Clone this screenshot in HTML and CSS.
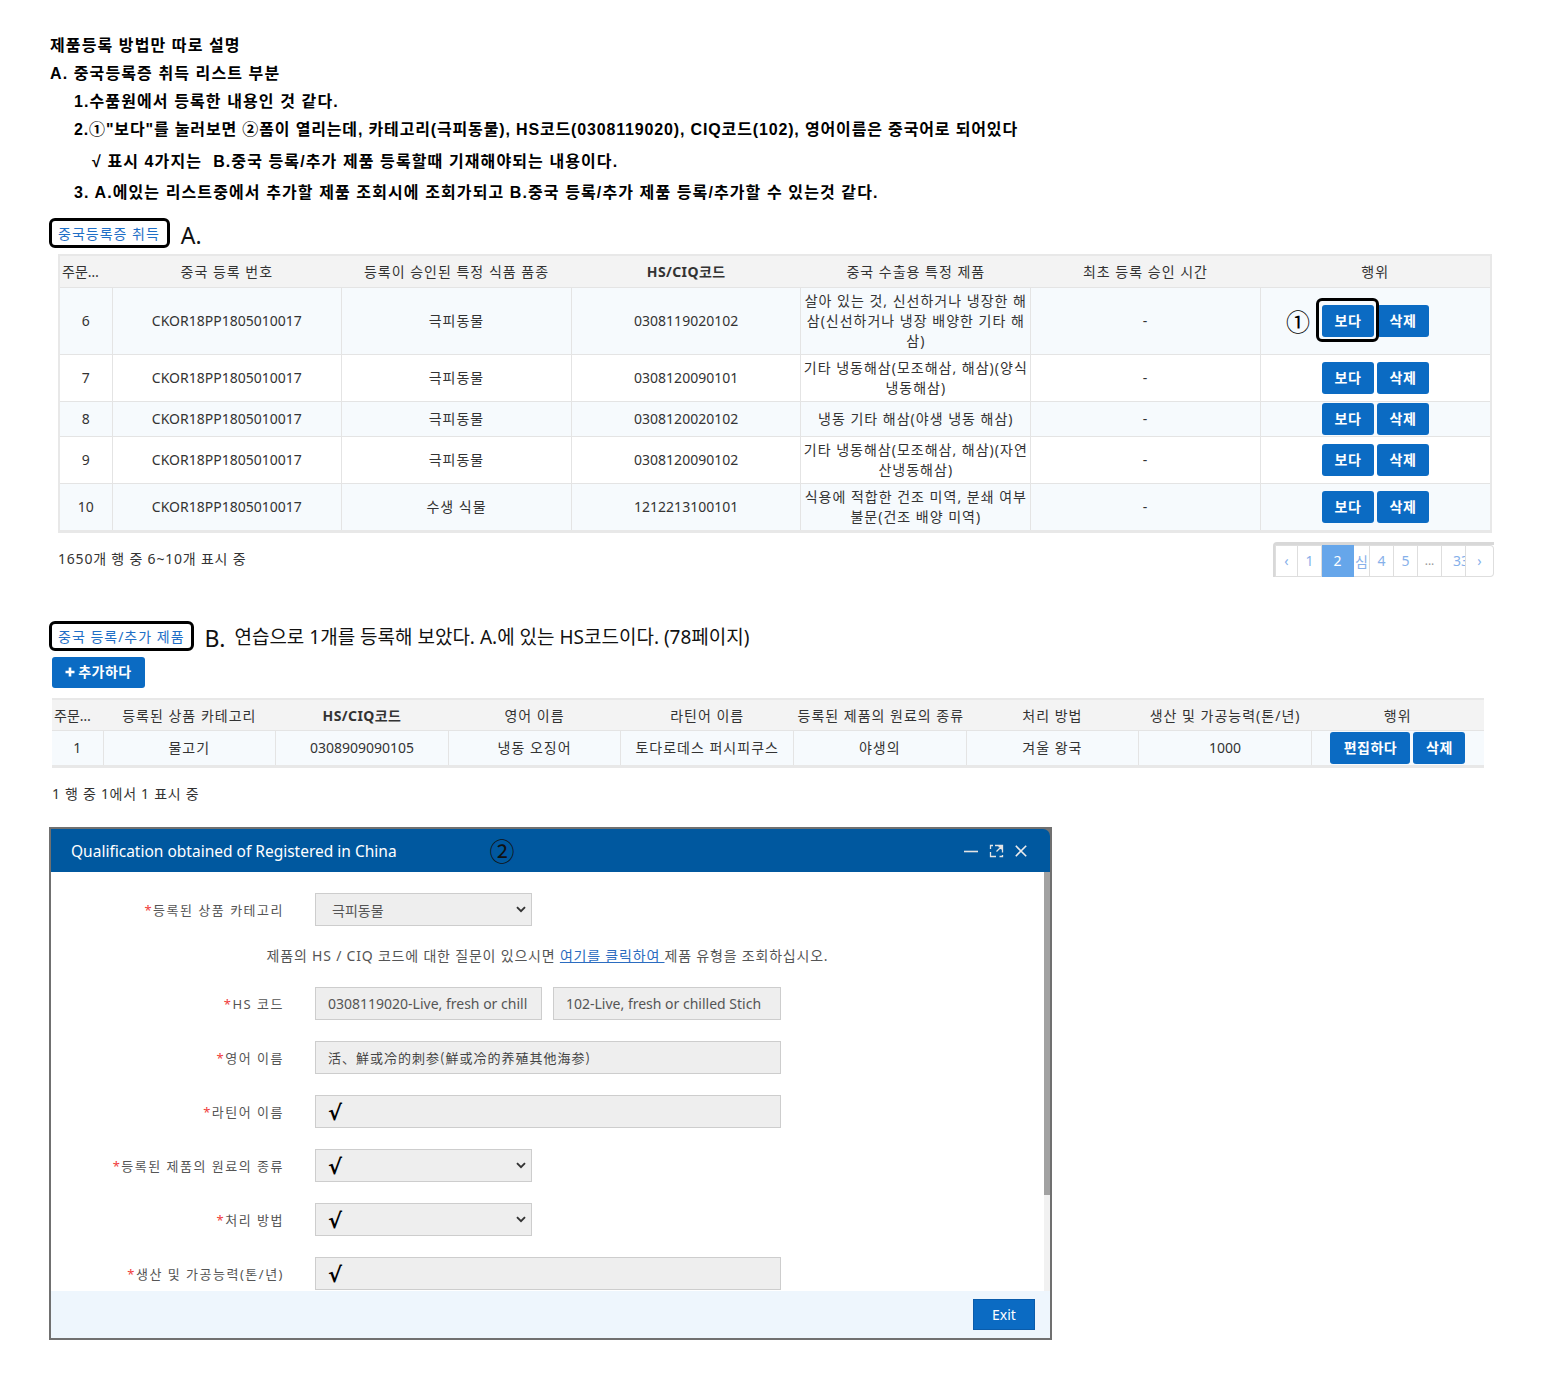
FILE: index.html
```html
<!DOCTYPE html>
<html lang="ko">
<head>
<meta charset="utf-8">
<title>제품등록 방법</title>
<link rel="stylesheet" href="styles.css">
</head>
<body>
<div class="page">
  <div class="notes">
    <p class="n0">제품등록 방법만 따로 설명</p>
    <p class="n0">A. 중국등록증 취득 리스트 부분</p>
    <p class="n1">1.수품원에서 등록한 내용인 것 같다.</p>
    <p class="n1 n4">2.①"보다"를 눌러보면 ②폼이 열리는데, 카테고리(극피동물), HS코드(0308119020), CIQ코드(102), 영어이름은 중국어로 되어있다</p>
    <p class="n2">√ 표시 4가지는 &nbsp;B.중국 등록/추가 제품 등록할때 기재해야되는 내용이다.</p>
    <p class="n1 n3">3. A.에있는 리스트중에서 추가할 제품 조회시에 조회가되고 B.중국 등록/추가 제품 등록/추가할 수 있는것 같다.</p>
  </div>

  <div class="sec-head sec-a">
    <span class="tag">중국등록증 취득</span>
    <span class="big">A.</span>
  </div>

  <div class="tbl-a-wrap">
    <table class="tbl tbl-a">
      <colgroup>
        <col class="c-no"><col><col><col><col><col><col>
      </colgroup>
      <thead>
        <tr>
          <th class="ell">주문번호</th>
          <th>중국 등록 번호</th>
          <th>등록이 승인된 특정 식품 품종</th>
          <th class="b">HS/CIQ코드</th>
          <th>중국 수출용 특정 제품</th>
          <th>최초 등록 승인 시간</th>
          <th>행위</th>
        </tr>
      </thead>
      <tbody>
        <tr class="odd">
          <td class="num">6</td><td class="num">CKOR18PP1805010017</td><td>극피동물</td><td class="num">0308119020102</td>
          <td class="nw">살아 있는 것, 신선하거나 냉장한 해<br>삼(신선하거나 냉장 배양한 기타 해<br>삼)</td>
          <td>-</td>
          <td class="act"><span class="btn hl">보다<span class="mark1">①</span></span><span class="btn">삭제</span></td>
        </tr>
        <tr>
          <td class="num">7</td><td class="num">CKOR18PP1805010017</td><td>극피동물</td><td class="num">0308120090101</td>
          <td class="nw">기타 냉동해삼(모조해삼, 해삼)(양식<br>냉동해삼)</td>
          <td>-</td>
          <td class="act"><span class="btn">보다</span><span class="btn">삭제</span></td>
        </tr>
        <tr class="odd">
          <td class="num">8</td><td class="num">CKOR18PP1805010017</td><td>극피동물</td><td class="num">0308120020102</td>
          <td class="nw">냉동 기타 해삼(야생 냉동 해삼)</td>
          <td>-</td>
          <td class="act"><span class="btn">보다</span><span class="btn">삭제</span></td>
        </tr>
        <tr>
          <td class="num">9</td><td class="num">CKOR18PP1805010017</td><td>극피동물</td><td class="num">0308120090102</td>
          <td class="nw">기타 냉동해삼(모조해삼, 해삼)(자연<br>산냉동해삼)</td>
          <td>-</td>
          <td class="act"><span class="btn">보다</span><span class="btn">삭제</span></td>
        </tr>
        <tr class="odd">
          <td class="num">10</td><td class="num">CKOR18PP1805010017</td><td>수생 식물</td><td class="num">1212213100101</td>
          <td class="nw">식용에 적합한 건조 미역, 분쇄 여부<br>불문(건조 배양 미역)</td>
          <td>-</td>
          <td class="act"><span class="btn">보다</span><span class="btn">삭제</span></td>
        </tr>
      </tbody>
    </table>
  </div>

  <div class="tfoot-a">
    <span class="count">1650개 행 중 6~10개 표시 중</span>
    <div class="pager">
      <span class="pg w23">‹</span>
      <span class="pg w24">1</span>
      <span class="pg w32 on">2</span>
      <span class="pg w16">심</span>
      <span class="pg w24">4</span>
      <span class="pg w24">5</span>
      <span class="pg w24 dots">...</span>
      <span class="pg w24 clip">33</span>
      <span class="pg w28 last">›</span>
    </div>
  </div>

  <div class="sec-head sec-b">
    <span class="tag">중국 등록/추가 제품</span>
    <span class="big">B.</span>
    <span class="mid">연습으로 1개를 등록해 보았다. A.에 있는 HS코드이다. (78페이지)</span>
  </div>

  <span class="btn add"><svg width="10" height="10" viewBox="0 0 10 10"><path d="M5 0.5v9M0.5 5h9" stroke="#fff" stroke-width="2.6"/></svg>추가하다</span>

  <table class="tbl tbl-b">
    <colgroup>
      <col class="c-no-b"><col><col><col><col><col><col><col><col>
    </colgroup>
    <thead>
      <tr>
        <th class="ell">주문번호</th>
        <th>등록된 상품 카테고리</th>
        <th class="b">HS/CIQ코드</th>
        <th>영어 이름</th>
        <th>라틴어 이름</th>
        <th>등록된 제품의 원료의 종류</th>
        <th>처리 방법</th>
        <th>생산 및 가공능력(톤/년)</th>
        <th>행위</th>
      </tr>
    </thead>
    <tbody>
      <tr class="odd">
        <td class="num">1</td><td>물고기</td><td class="num">0308909090105</td><td>냉동 오징어</td><td>토다로데스 퍼시피쿠스</td><td>야생의</td><td>겨울 왕국</td><td class="num">1000</td>
        <td class="act"><span class="btn w80">편집하다</span><span class="btn">삭제</span></td>
      </tr>
    </tbody>
  </table>

  <div class="count count-b">1 행 중 1에서 1 표시 중</div>

  <div class="dialog">
    <div class="dlg-head">
      <span class="dlg-title">Qualification obtained of Registered in China</span>
      <span class="mark2">②</span>
      <span class="spacer"></span>
      <span class="dlg-icons">
        <svg width="14" height="14" viewBox="0 0 14 14"><path d="M0 7.5h14" stroke="#e4e4e4" stroke-width="1.6"/></svg>
        <svg width="15" height="14" viewBox="0 0 15 14"><path d="M6 1.5h7.5v7M1.5 8v4.5h5.5M1.5 5v-3.5h2.5M13.5 11v1.5h-3M7.5 7.5l5-5M9.5 2.5h3v3" stroke="#e4e4e4" stroke-width="1.3" fill="none"/></svg>
        <svg width="12" height="12" viewBox="0 0 12 12"><path d="M0.8 0.8l10.4 10.4M11.2 0.8L0.8 11.2" stroke="#ececec" stroke-width="1.6"/></svg>
      </span>
    </div>
    <div class="dlg-body">
      <div class="dlg-content">
        <div class="frow">
          <label class="lbl"><i>*</i>등록된 상품 카테고리</label>
          <div class="fld sel w217"><span>극피동물</span><svg width="10" height="7" viewBox="0 0 10 7"><path d="M1 1.2l4 4 4-4" stroke="#333" stroke-width="1.9" fill="none"/></svg></div>
        </div>
        <p class="info">제품의 HS / CIQ 코드에 대한 질문이 있으시면 <a class="lnk">여기를 클릭하여 </a>제품 유형을 조회하십시오.</p>
        <div class="frow">
          <label class="lbl"><i>*</i>HS 코드</label>
          <div class="fld w227"><span class="cut">0308119020-Live, fresh or chill</span></div>
          <div class="fld w228 ml11"><span class="cut">102-Live, fresh or chilled Stich</span></div>
        </div>
        <div class="frow">
          <label class="lbl"><i>*</i>영어 이름</label>
          <div class="fld w466"><span class="zh">活、鮮或冷的刺参(鮮或冷的养殖其他海参)</span></div>
        </div>
        <div class="frow">
          <label class="lbl"><i>*</i>라틴어 이름</label>
          <div class="fld w466"><span class="chk">√</span></div>
        </div>
        <div class="frow">
          <label class="lbl"><i>*</i>등록된 제품의 원료의 종류</label>
          <div class="fld sel w217"><span class="chk">√</span><svg width="10" height="7" viewBox="0 0 10 7"><path d="M1 1.2l4 4 4-4" stroke="#333" stroke-width="1.9" fill="none"/></svg></div>
        </div>
        <div class="frow">
          <label class="lbl"><i>*</i>처리 방법</label>
          <div class="fld sel w217"><span class="chk">√</span><svg width="10" height="7" viewBox="0 0 10 7"><path d="M1 1.2l4 4 4-4" stroke="#333" stroke-width="1.9" fill="none"/></svg></div>
        </div>
        <div class="frow">
          <label class="lbl"><i>*</i>생산 및 가공능력(톤/년)</label>
          <div class="fld w466"><span class="chk">√</span></div>
        </div>
      </div>
      <div class="scrollbar"><div class="thumb"></div></div>
    </div>
    <div class="dlg-foot">
      <span class="exit">Exit</span>
    </div>
  </div>
</div>
</body>
</html>
```

FILE: styles.css
```css
* { box-sizing: border-box; }

body {
  margin: 0;
  background: #fff;
  font-family: "Noto Sans", "Noto Sans CJK KR", sans-serif;
  color: #333;
}

.page {
  padding: 30px 0 40px 49px;
}

/* notes */
.notes { padding-top: 2px; }
.notes p {
  margin: 0;
  font-family: "Liberation Sans", "Noto Sans CJK KR", sans-serif;
  font-weight: 700;
  font-size: 16px;
  letter-spacing: 1.1px;
  line-height: 28px;
  color: #000;
  white-space: nowrap;
}
.notes .n0 { padding-left: 1px; }
.notes .n1 { padding-left: 25px; }
.notes .n4 { letter-spacing: 0.85px; }
.notes .n2 { padding-left: 43px; margin-top: 2px; line-height: 31px; }
.notes .n3 { line-height: 31px; }

/* section headings */
.sec-head {
  display: flex;
  align-items: center;
  height: 30px;
}
.sec-a { margin-top: 10px; }
.sec-b { margin-top: 44px; }

.tag {
  display: flex;
  align-items: center;
  height: 30px;
  border: 3px solid #000;
  border-radius: 6px;
  padding: 0 7px 0 6px;
  font-size: 14px;
  letter-spacing: 1px;
  color: #1f6fc6;
  white-space: nowrap;
}
.sec-b .tag { padding-right: 6px; }
.big {
  margin-left: 11px;
  font-size: 23px;
  color: #111;
  line-height: 30px;
  padding-top: 4px;
}
.mid {
  margin-left: 9px;
  font-size: 19px;
  letter-spacing: 0;
  color: #111;
  line-height: 30px;
  padding-top: 2px;
  white-space: nowrap;
}

/* tables */
.tbl {
  border-collapse: collapse;
  table-layout: fixed;
  font-size: 14px;
  color: #333;
}
.tbl th {
  background: #f3f3f3;
  font-weight: 400;
  text-align: center;
  padding: 0 4px;
  white-space: nowrap;
  letter-spacing: 1px;
}
.tbl th.b { font-weight: 700; letter-spacing: 0.4px; }
.tbl th.ell {
  overflow: hidden;
  text-overflow: ellipsis;
  padding: 0 2px;
  text-align: left;
  letter-spacing: 0;
}
.tbl td {
  text-align: center;
  padding: 3px 2px;
  line-height: 20px;
  letter-spacing: 1px;
  border-top: 1px solid #e4e4e4;
  border-left: 1px solid #e4e4e4;
}
.tbl td.num { letter-spacing: 0; }
.tbl td:first-child { border-left: none; }
.tbl tr.odd td { background: #f6fafd; }
.tbl td.nw { white-space: nowrap; }
.tbl td.act { white-space: nowrap; padding: 1px 0; letter-spacing: 0; }

.tbl-a-wrap {
  margin: 6px 0 0 9px;
  width: 1434px;
  border: 2px solid #e8e8e8;
  border-bottom-width: 3px;
}
.tbl-a { width: 1430px; }
.tbl-a th { height: 31px; }
.tbl-a col.c-no { width: 52px; }

.tbl-b {
  margin: 10px 0 0 3px;
  width: 1432px;
  border-top: 2px solid #e8e8e8;
  border-bottom: 3px solid #e8e8e8;
}
.tbl-b col.c-no-b { width: 51px; }
.tbl-b th { height: 32px; }

/* buttons */
.btn {
  display: inline-flex;
  align-items: center;
  justify-content: center;
  height: 32px;
  width: 52px;
  background: #0b6bc3;
  color: #fff;
  font-weight: 700;
  font-size: 14px;
  letter-spacing: 0.5px;
  border-radius: 3px;
  vertical-align: middle;
  line-height: 1;
  font-family: "Noto Sans", "Noto Sans CJK KR", sans-serif;
}
.btn + .btn { margin-left: 3px; }
.btn.w80 { width: 80px; }

.btn.hl { position: relative; }
.btn.hl::after {
  content: "";
  position: absolute;
  left: -6px;
  right: -5px;
  top: -7px;
  bottom: -5px;
  border: 3px solid #000;
  border-radius: 6px;
}
.mark1 {
  position: absolute;
  left: -36px;
  top: 50%;
  transform: translateY(-52%);
  font-size: 24px;
  font-weight: 400;
  color: #000;
  font-family: "Noto Sans CJK KR", sans-serif;
}

.btn.add {
  display: flex;
  width: 93px;
  height: 31px;
  margin: 6px 0 0 3px;
  gap: 3px;
}

/* footers */
.tfoot-a {
  display: flex;
  justify-content: space-between;
  align-items: center;
  margin: 9px 0 0 9px;
  width: 1436px;
}
.count {
  font-size: 14px;
  letter-spacing: 0.8px;
  color: #333;
  line-height: 20px;
}
.count-b {
  margin: 16px 0 0 3px;
  letter-spacing: 0.7px;
}

.pager {
  display: flex;
  height: 35px;
  border-top: 3px solid #d8d8d8;
  border-left: 2px solid #d8d8d8;
  border-top-left-radius: 4px;
}
.pg {
  display: flex;
  align-items: center;
  justify-content: center;
  height: 32px;
  border: 1px solid #dedede;
  border-left: none;
  font-size: 14px;
  color: #86b0ea;
  overflow: hidden;
  white-space: nowrap;
}
.pg:first-child { border-left: 1px solid #dedede; }
.pg.last { border-radius: 0 4px 4px 0; }
.pg.on { background: #66a6ea; color: #fff; border-color: #66a6ea; }
.pg.dots { color: #999; font-size: 12px; }
.pg.clip { justify-content: flex-start; padding-left: 11px; }
.w16 { width: 16px; }
.w23 { width: 23px; }
.w24 { width: 24px; }
.w28 { width: 28px; }
.w32 { width: 32px; }

/* dialog */
.dialog {
  margin-top: 23px;
  width: 1003px;
  border: 2px solid #707070;
  background: #737373;
}
.dlg-head {
  display: flex;
  align-items: center;
  height: 43px;
  background: #00589f;
  border-top-right-radius: 7px;
  padding: 0 23px 0 20px;
}
.dlg-title {
  color: #fff;
  font-size: 15.5px;
  white-space: nowrap;
}
.mark2 {
  margin-left: 93px;
  font-size: 25px;
  color: #111;
  font-family: "Noto Sans CJK KR", sans-serif;
  line-height: 1;
}
.spacer { flex: 1; }
.dlg-icons {
  display: flex;
  align-items: center;
  gap: 11px;
}

.dlg-body {
  display: flex;
  height: 419px;
  background: #fff;
}
.dlg-content {
  flex: 1;
  overflow: hidden;
  padding-top: 21px;
}
.scrollbar {
  width: 6px;
  background: #f1f1f1;
}
.thumb {
  height: 323px;
  background: #a2a2a2;
}

.frow {
  display: flex;
  align-items: center;
  height: 33px;
  margin-bottom: 21px;
}
.lbl {
  width: 233px;
  margin-right: 31px;
  text-align: right;
  font-size: 13px;
  color: #555;
  white-space: nowrap;
  letter-spacing: 1.5px;
}
.lbl i {
  font-style: normal;
  color: #f03c3c;
}
.info {
  margin: -1px 0 21px;
  text-align: center;
  font-size: 14px;
  letter-spacing: 0.8px;
  line-height: 20px;
  color: #555;
}
.lnk {
  color: #2b6cc0;
  text-decoration: underline;
}

.fld {
  display: flex;
  align-items: center;
  height: 33px;
  border: 1px solid #cdcdcd;
  background: #eee;
  padding: 0 12px;
  font-size: 14px;
  color: #555;
  overflow: hidden;
  white-space: nowrap;
}
.fld.sel {
  justify-content: space-between;
  padding-right: 5px;
  padding-left: 16px;
}
.fld.sel .chk { margin-left: -4px; }
.fld .cut { overflow: hidden; }
.w217 { width: 217px; }
.w227 { width: 227px; }
.w228 { width: 228px; }
.w466 { width: 466px; }
.ml11 { margin-left: 11px; }
.zh {
  font-family: "Noto Sans CJK SC", sans-serif;
  font-size: 13px;
  color: #444;
  letter-spacing: 1px;
}
.chk {
  font-family: "Noto Sans", "DejaVu Sans", sans-serif;
  font-weight: 700;
  font-size: 21px;
  color: #000;
}

.dlg-foot {
  display: flex;
  justify-content: flex-end;
  height: 47px;
  background: #eef6fd;
  padding: 8px 15px 0 0;
}
.exit {
  display: flex;
  align-items: center;
  justify-content: center;
  width: 62px;
  height: 31px;
  background: #0b6bc3;
  border: 1px solid #0a5cab;
  color: #fff;
  font-size: 14px;
}
```
